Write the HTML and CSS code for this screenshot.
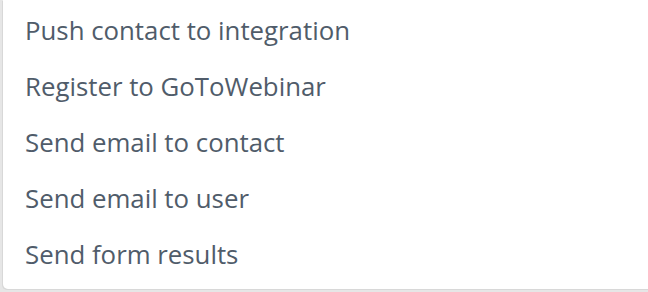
FILE: index.html
```html
<!DOCTYPE html>
<html>
<head>
<meta charset="utf-8">
<link rel="stylesheet" href="styles.css">
</head>
<body>
<div class="menu">
  <ul class="list">
    <li class="item">Push contact to integration</li>
    <li class="item">Register to GoToWebinar</li>
    <li class="item">Send email to contact</li>
    <li class="item">Send email to user</li>
    <li class="item">Send form results</li>
  </ul>
</div>
</body>
</html>
```

FILE: styles.css
```css
html, body {
  margin: 0;
  padding: 0;
  background: #e6e6e6;
  width: 648px;
  height: 292px;
  overflow: hidden;
}
.menu {
  box-sizing: border-box;
  width: 660px;
  height: 289px;
  background: #ffffff;
  margin-left: 3px;
  border-bottom-left-radius: 5px;
  box-shadow: -1px 1px 0 #d8d8d8;
  padding-top: 2px;
}
.list {
  list-style: none;
  margin: 0;
  padding: 0;
}
.item {
  height: 56px;
  line-height: 56px;
  padding-left: 22px;
  font-family: "Open Sans", sans-serif;
  font-size: 25.8px;
  color: #505c6a;
}
```
